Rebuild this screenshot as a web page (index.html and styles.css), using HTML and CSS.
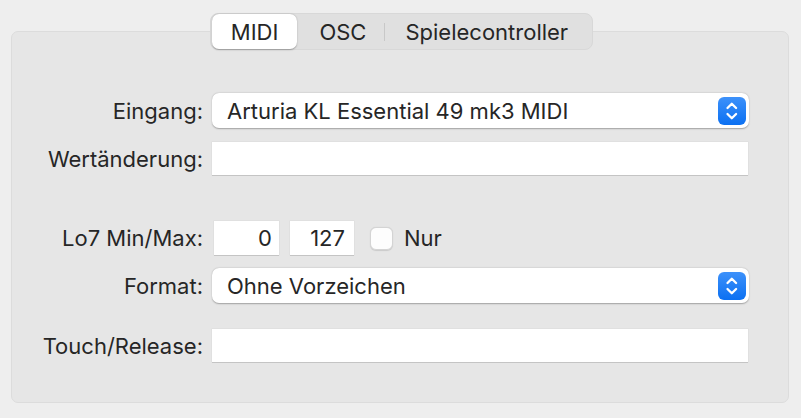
FILE: index.html
```html
<!DOCTYPE html>
<html lang="de">
<head>
<meta charset="utf-8">
<title>MIDI</title>
<link rel="stylesheet" href="styles.css">
</head>
<body>
<div class="page">
  <div class="panel">
    <div class="tabs">
      <div class="seg">
        <span class="tab tab-sel">MIDI</span>
        <span class="tab tab-osc">OSC</span>
        <span class="sep"></span>
        <span class="tab tab-game">Spielecontroller</span>
      </div>
    </div>
    <div class="form">
      <div class="row r1">
        <span class="label">Eingang:</span>
        <div class="popup">
          <span class="ptext">Arturia KL Essential 49 mk3 MIDI</span>
          <span class="stepper"><svg viewBox="0 0 28 28" width="28" height="28"><path d="M9.5 11 L13.8 6.7 L18.1 11" /><path d="M9.5 17 L13.8 21.3 L18.1 17" /></svg></span>
        </div>
      </div>
      <div class="row r2">
        <span class="label">Wertänderung:</span>
        <div class="field"></div>
      </div>
      <div class="row r3">
        <span class="label">Lo7 Min/Max:</span>
        <div class="inline">
          <div class="field num">0</div>
          <div class="field num n2">127</div>
          <span class="check"></span>
          <span class="ctext">Nur</span>
        </div>
      </div>
      <div class="row r4">
        <span class="label">Format:</span>
        <div class="popup">
          <span class="ptext">Ohne Vorzeichen</span>
          <span class="stepper"><svg viewBox="0 0 28 28" width="28" height="28"><path d="M9.5 11 L13.8 6.7 L18.1 11" /><path d="M9.5 17 L13.8 21.3 L18.1 17" /></svg></span>
        </div>
      </div>
      <div class="row r5">
        <span class="label">Touch/Release:</span>
        <div class="field"></div>
      </div>
    </div>
  </div>
</div>
</body>
</html>
```

FILE: styles.css
```css
html, body {
  margin: 0;
  padding: 0;
}
body {
  background: #eeeeee;
  font-family: Inter, "Noto Sans", "Liberation Sans", sans-serif;
  font-size: 22px;
  color: #262626;
  width: 801px;
  height: 418px;
  overflow: hidden;
}
.page {
  padding: 31px 12px 16px 11px;
}
.panel {
  background: #e6e6e6;
  border: 1px solid #dcdcdc;
  border-radius: 7px;
  height: 372px;
  box-sizing: border-box;
}
.tabs {
  display: flex;
  justify-content: center;
  margin-top: -19px;
  padding-left: 3px;
}
.seg {
  display: flex;
  align-items: center;
  height: 37px;
  box-sizing: border-box;
  background: #e0e0e0;
  border: 1px solid #d8d8d8;
  border-radius: 8px;
  padding: 0 1px;
}
.tab {
  height: 35px;
  display: flex;
  align-items: center;
  line-height: 1;
}
.tab-sel {
  background: #ffffff;
  border-radius: 7px;
  box-shadow: 0 0.5px 1.5px rgba(0,0,0,0.3);
  padding: 0 19px;
}
.tab-osc {
  padding: 0 18px 0 22px;
}
.tab-game {
  padding: 0 23px 0 20px;
}
.sep {
  width: 1px;
  height: 18px;
  background: #c8c8c8;
}
.form {
  margin-top: 43px;
  padding-right: 39px;
}
.row {
  display: grid;
  grid-template-columns: 191px 1fr;
  column-gap: 9px;
  align-items: center;
}
.r1 { height: 35px; }
.r2 { height: 33px; margin-top: 14px; }
.r3 { height: 34px; margin-top: 46px; }
.r4 { height: 35px; margin-top: 13px; }
.r5 { height: 33px; margin-top: 26px; }
.label {
  text-align: right;
  white-space: nowrap;
}
.popup {
  height: 35px;
  box-sizing: border-box;
  background: #ffffff;
  border-radius: 7px;
  box-shadow: 0 0.5px 1.5px rgba(0,0,0,0.3);
  display: flex;
  align-items: center;
  justify-content: space-between;
  padding: 0 3px 0 15px;
}
.stepper {
  width: 28px;
  height: 28px;
  border-radius: 6px;
  background: linear-gradient(#3d91fa, #0b70f2);
  display: flex;
}
.stepper path {
  fill: none;
  stroke: #ffffff;
  stroke-width: 2.3;
  stroke-linecap: round;
  stroke-linejoin: round;
}
.field {
  height: 33px;
  box-sizing: border-box;
  background: #ffffff;
  box-shadow: 0 1px 0 #c4c4c4, 0 0 0 0.5px #dadada;
  margin-right: 1px;
}
.inline {
  display: flex;
  align-items: center;
  height: 34px;
}
.num {
  width: 65px;
  height: 34px;
  text-align: right;
  padding-right: 7px;
  line-height: 34px;
  margin-left: 2px;
}
.n2 {
  width: 64px;
  margin-left: 10px;
  padding-right: 9px;
}
.check {
  width: 23px;
  height: 23px;
  box-sizing: border-box;
  background: #fdfdfd;
  border-radius: 6px;
  border: 1px solid #d4d4d4;
  box-shadow: 0 0.5px 1px rgba(0,0,0,0.12);
  margin-left: 15px;
}
.ctext {
  margin-left: 11px;
}
```
